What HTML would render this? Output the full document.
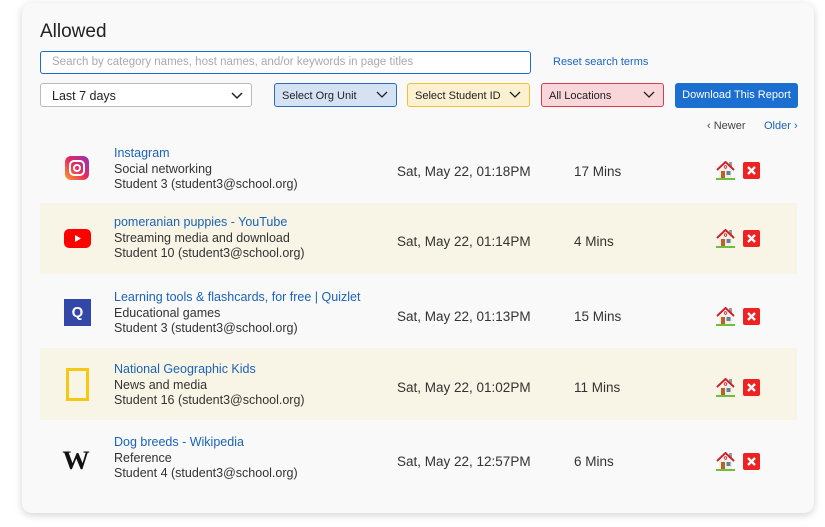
<!DOCTYPE html>
<html><head><meta charset="utf-8"><style>
*{margin:0;padding:0;box-sizing:border-box}
body{width:825px;height:527px;background:#fff;font-family:"Liberation Sans",Arial,sans-serif;position:relative;overflow:hidden;color:#333}
.card{position:absolute;left:22px;top:3px;width:792px;height:510px;background:#f9f9f9;border-radius:10px;box-shadow:0 2px 8px rgba(0,0,0,.18)}
.a{position:absolute}
h1{position:absolute;left:40px;top:21px;font-size:19px;font-weight:normal;color:#222}
.search{left:40px;top:51px;width:491px;height:23px;border:1.5px solid #1a6fc9;border-radius:3px;background:#fff;font-size:11.5px;color:#aaa;padding:4px 11px}
.reset{left:553px;top:56px;font-size:11px;color:#1a66c0}
.sel{height:24px;border-radius:3px;font-size:11px;color:#222;padding:6px 7px}
.sel svg{position:absolute;right:8px;top:7px}
.btn{left:675px;top:83px;width:123px;height:25px;background:#1a6fd0;color:#fff;border-radius:3px;font-size:11px;text-align:center;line-height:25px;white-space:nowrap}
.nav{top:120px;font-size:11px}
.band{left:40px;width:757px;height:71px;background:#f8f4e6}
.t{left:114px;font-size:12.5px;line-height:15.5px;color:#333}
.t b{font-weight:normal;color:#1a63b8;display:block}
.d{left:397px;font-size:13.5px;color:#333}
.m{left:574px;font-size:13.5px;color:#333}
.x{left:743px;width:17px;height:17px;background:#e22;border-radius:2px}
.h{left:716px}
</style></head><body>
<svg width="0" height="0" style="position:absolute"><defs>
<g id="house"><rect x="13" y="1" width="3" height="5" fill="#999"/><path d="M1 9L9.5 1 18 9" stroke="#d0202a" stroke-width="2" fill="none"/><rect x="3" y="8" width="13" height="9" fill="#f4efe6"/><rect x="5" y="10" width="4" height="7" fill="#b5652a"/><rect x="10.5" y="10" width="4" height="4" fill="#607fa0"/><circle cx="9.5" cy="6" r="1.3" fill="none" stroke="#d0202a" stroke-width=".8"/><rect x="0" y="17" width="19" height="2" fill="#6cbf3a"/></g>
<g id="xx"><path d="M5 5l7 7M12 5l-7 7" stroke="#fff" stroke-width="2.3"/></g>
</defs></svg>
<div class="card"></div>
<h1>Allowed</h1>
<div class="a search">Search by category names, host names, and/or keywords in page titles</div>
<div class="a reset">Reset search terms</div>
<div class="a sel" style="left:40px;top:83px;width:212px;background:#fff;border:1px solid #bbb;font-size:12.5px;padding:5px 11px">Last 7 days<svg width="12" height="8" style="top:8px"><path d="M1 1l5 5 5-5" stroke="#222" stroke-width="1.5" fill="none"/></svg></div>
<div class="a sel" style="left:274px;top:83px;width:123px;background:#d4e2f4;border:1.5px solid #2a6cc0">Select Org Unit<svg width="12" height="8"><path d="M1 1l5 5 5-5" stroke="#222" stroke-width="1.3" fill="none"/></svg></div>
<div class="a sel" style="left:407px;top:83px;width:123px;background:#fbf0cf;border:1.5px solid #f0c030">Select Student ID<svg width="12" height="8"><path d="M1 1l5 5 5-5" stroke="#222" stroke-width="1.3" fill="none"/></svg></div>
<div class="a sel" style="left:541px;top:83px;width:123px;background:#f8d6da;border:1.5px solid #d04050">All Locations<svg width="12" height="8"><path d="M1 1l5 5 5-5" stroke="#222" stroke-width="1.3" fill="none"/></svg></div>
<div class="a btn">Download This Report</div>
<div class="a nav" style="left:707px;color:#444">‹ Newer</div>
<div class="a nav" style="left:764px;color:#1a63b8">Older ›</div>

<div class="a band" style="top:203px"></div>
<div class="a band" style="top:348px;height:72px"></div>

<div class="a" style="left:65px;top:156px;width:24px;height:24px;border-radius:6px;background:linear-gradient(45deg,#f9a030,#e8285a 50%,#8a35c0)"><div style="position:absolute;left:4px;top:4px;width:16px;height:16px;border:2px solid #fff;border-radius:5px"></div><div style="position:absolute;left:8px;top:8px;width:8px;height:8px;border:2px solid #fff;border-radius:50%"></div></div>
<div class="a" style="left:64px;top:229px;width:27px;height:19px;border-radius:5px;background:#f00"><svg width="27" height="19"><path d="M11 6l6 3.5-6 3.5z" fill="#fff"/></svg></div>
<div class="a" style="left:64px;top:299px;width:27px;height:27px;background:#3247a8;color:#fff;font-weight:bold;font-size:15px;text-align:center;line-height:27px">Q</div>
<div class="a" style="left:66px;top:368px;width:23px;height:33px;border:3.5px solid #f5c913"></div>
<div class="a" style="left:63px;top:446px;font-family:'Liberation Serif',serif;font-size:26px;color:#111;font-weight:bold;transform:scaleX(1.05)">W</div>

<div class="a t" style="top:146px"><b>Instagram</b>Social networking<br>Student 3 (student3@school.org)</div>
<div class="a t" style="top:215px"><b>pomeranian puppies - YouTube</b>Streaming media and download<br>Student 10 (student3@school.org)</div>
<div class="a t" style="top:290px"><b>Learning tools &amp; flashcards, for free | Quizlet</b>Educational games<br>Student 3 (student3@school.org)</div>
<div class="a t" style="top:362px"><b>National Geographic Kids</b>News and media<br>Student 16 (student3@school.org)</div>
<div class="a t" style="top:435px"><b>Dog breeds - Wikipedia</b>Reference<br>Student 4 (student3@school.org)</div>

<div class="a d" style="top:164px">Sat, May 22, 01:18PM</div><div class="a m" style="top:164px">17 Mins</div>
<div class="a d" style="top:234px">Sat, May 22, 01:14PM</div><div class="a m" style="top:234px">4 Mins</div>
<div class="a d" style="top:309px">Sat, May 22, 01:13PM</div><div class="a m" style="top:309px">15 Mins</div>
<div class="a d" style="top:380px">Sat, May 22, 01:02PM</div><div class="a m" style="top:380px">11 Mins</div>
<div class="a d" style="top:454px">Sat, May 22, 12:57PM</div><div class="a m" style="top:454px">6 Mins</div>

<svg class="a h" style="top:161px" width="19" height="19"><use href="#house"/></svg><svg class="a x" style="top:162px" width="17" height="17"><use href="#xx"/></svg>
<svg class="a h" style="top:229px" width="19" height="19"><use href="#house"/></svg><svg class="a x" style="top:230px" width="17" height="17"><use href="#xx"/></svg>
<svg class="a h" style="top:307px" width="19" height="19"><use href="#house"/></svg><svg class="a x" style="top:308px" width="17" height="17"><use href="#xx"/></svg>
<svg class="a h" style="top:378px" width="19" height="19"><use href="#house"/></svg><svg class="a x" style="top:379px" width="17" height="17"><use href="#xx"/></svg>
<svg class="a h" style="top:452px" width="19" height="19"><use href="#house"/></svg><svg class="a x" style="top:453px" width="17" height="17"><use href="#xx"/></svg>
</body></html>
